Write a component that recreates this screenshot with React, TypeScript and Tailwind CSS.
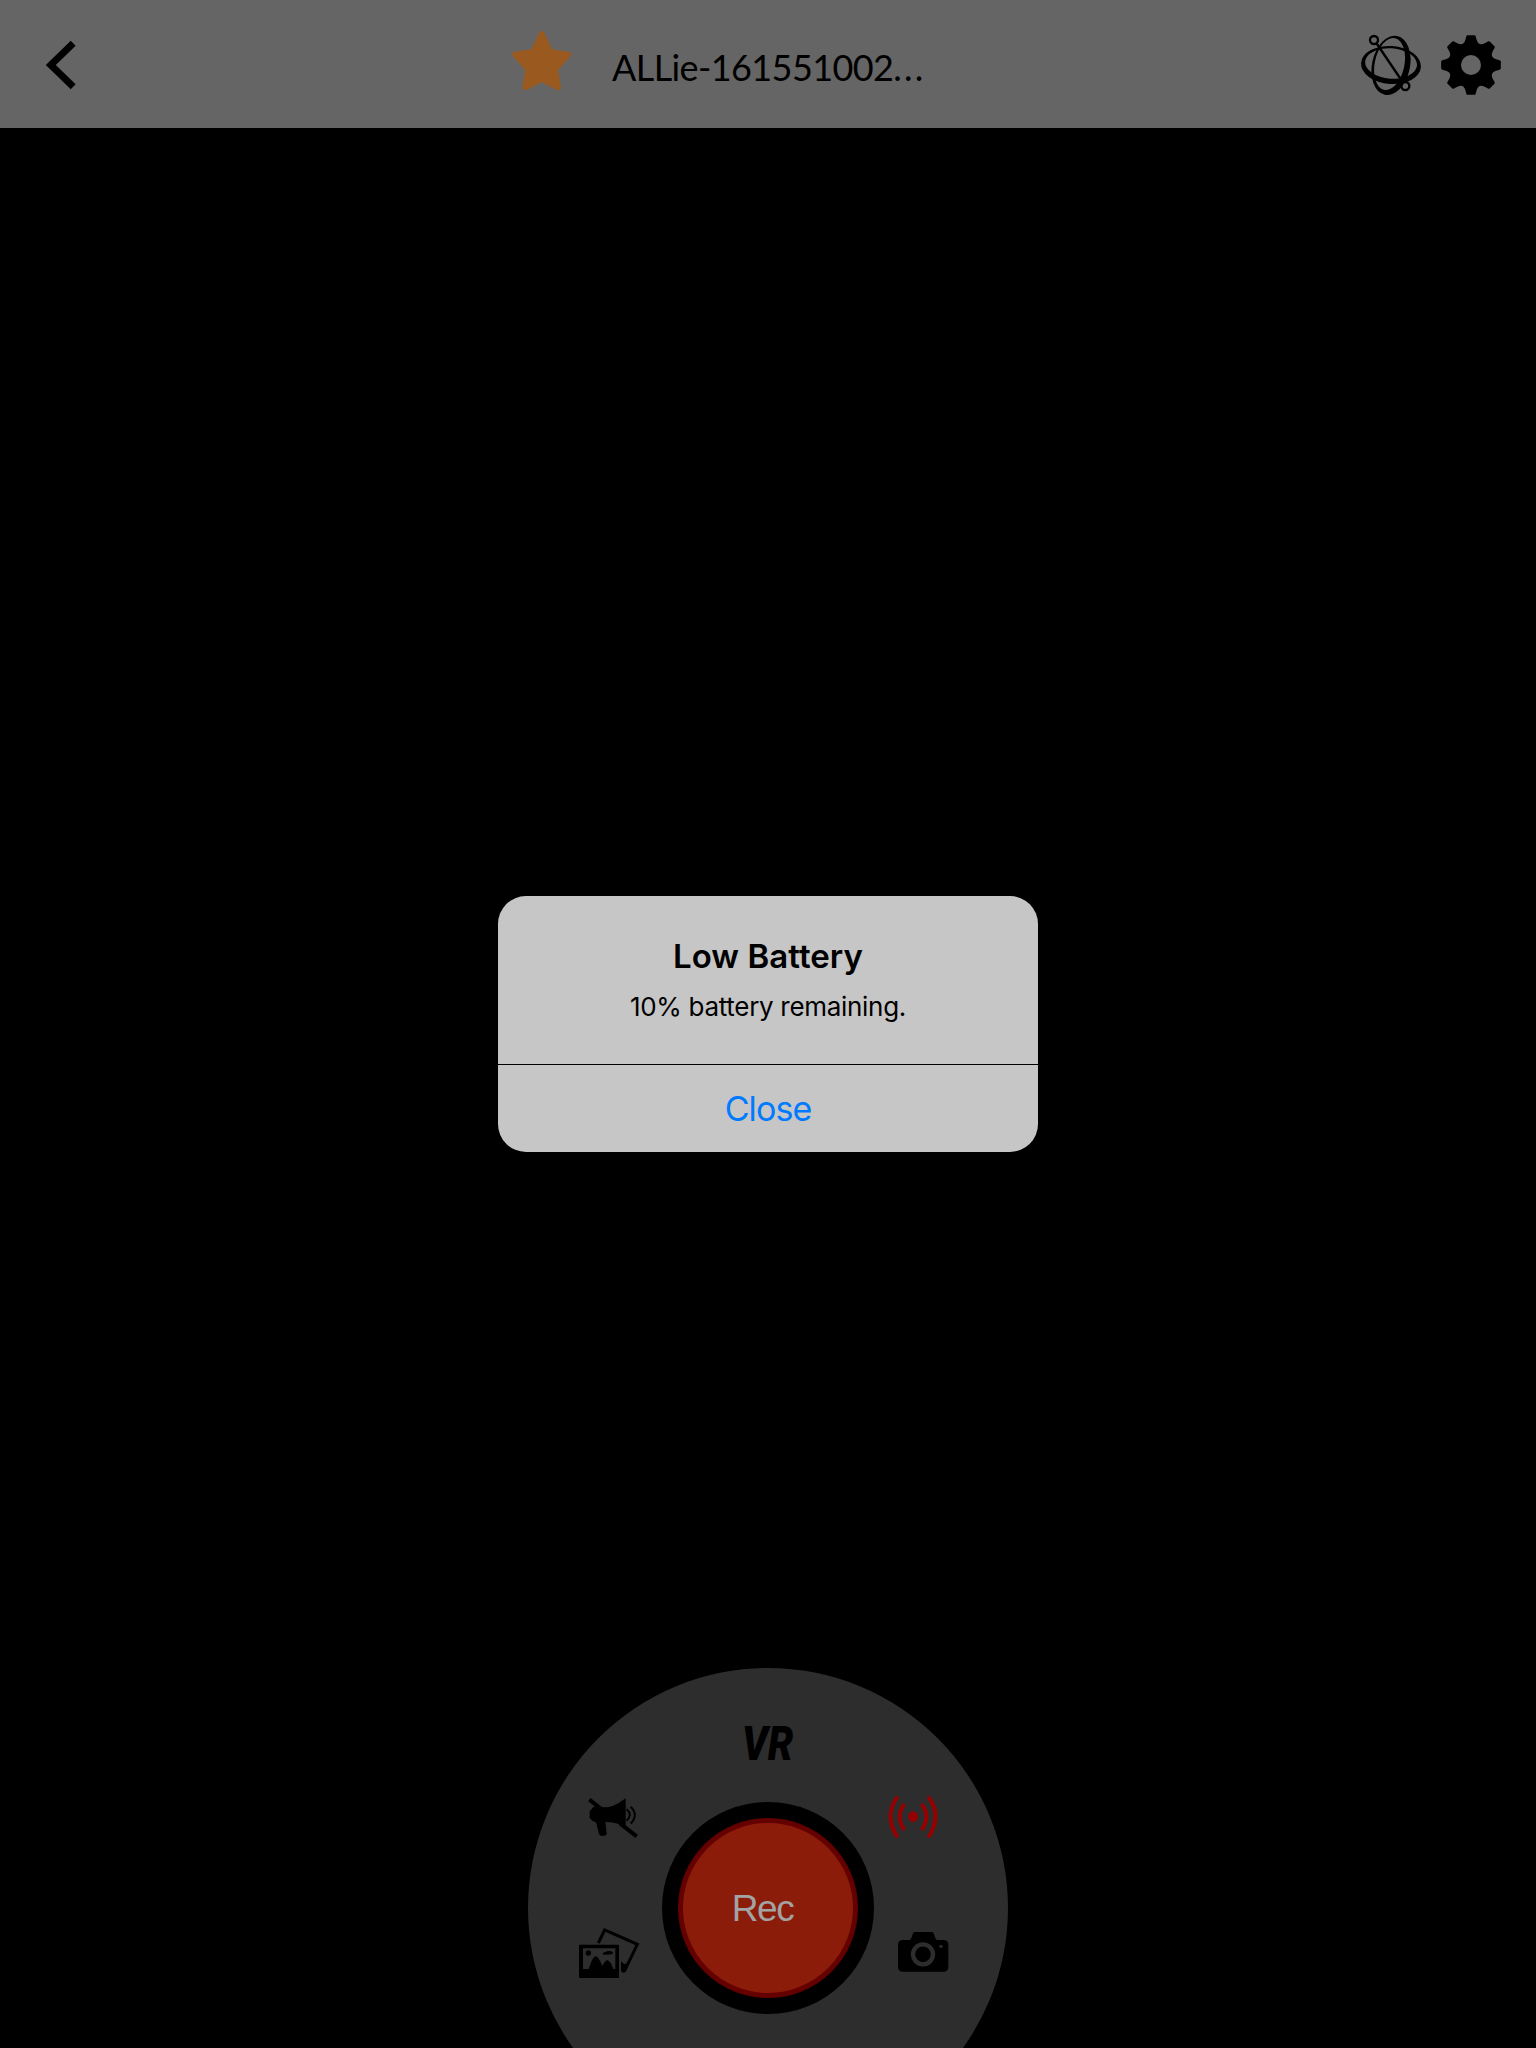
import React from "react";

function BackIcon() {
  return (
    <svg className="h-[54px] w-9" viewBox="0 0 36 54" fill="none" stroke="#000" strokeWidth="7">
      <path d="M31.2 5.2 8.8 27l22.4 21.8" />
    </svg>
  );
}

function StarIcon() {
  return (
    <svg className="h-16 w-16 shrink-0" viewBox="510 29 64 64" fill="#9a591f" stroke="#9a591f" strokeWidth="6" strokeLinejoin="round">
      <path d="M541.7 34.2 550 52l18 2.6-13.2 14.6 3.2 18-16.3-8.4-16.3 8.4 3.2-18-13.2-14.6 18-2.6z" />
    </svg>
  );
}

function OrbitIcon() {
  return (
    <svg className="h-[62px] w-16" viewBox="57 72 192 186" fill="none" stroke="#000" strokeWidth="7">
      <g transform="rotate(4 153 165)">
        <path
          fill="#000"
          stroke="none"
          fillRule="evenodd"
          d="M63 165a90 57 0 1 0 180 0a90 57 0 1 0-180 0zM75 160.500a78 45.500 0 1 0 156 0a78 45.500 0 1 0-156 0z"
        />
      </g>
      <g transform="rotate(12 153 166)">
        <path
          fill="#000"
          stroke="none"
          fillRule="evenodd"
          d="M96 166a57 90 0 1 0 114 0a57 90 0 1 0-114 0zM103.500 163a44.500 79 0 1 0 89 0a44.500 79 0 1 0-89 0z"
        />
      </g>
      <path d="M109 99 188 216" />
      <circle cx="102" cy="90" r="12" />
      <circle cx="196" cy="228" r="12" />
    </svg>
  );
}

const gearPath = (() => {
  const point = (x: number, y: number, turn: number) => {
    const a = (turn * Math.PI) / 4;
    const px = x * Math.cos(a) - y * Math.sin(a);
    const py = x * Math.sin(a) + y * Math.cos(a);
    return `${px.toFixed(2)} ${py.toFixed(2)}`;
  };
  let d = "";
  for (let i = 0; i < 8; i++) {
    d += `${i ? "L" : "M"}${point(-17, -75, i)}L${point(-14, -86, i)}Q${point(-13, -89.5, i)} ${point(-10, -89.5, i)}`;
    d += `L${point(10, -89.5, i)}Q${point(13, -89.5, i)} ${point(14, -86, i)}L${point(17, -75, i)}`;
    d += `Q${point(23, -56, i)} ${point(-17, -75, i + 1)}`;
  }
  return d + "ZM-30 0a30 30 0 1 0 60 0a30 30 0 1 0-60 0z";
})();

function GearIcon() {
  return (
    <svg className="h-[62px] w-[62px]" viewBox="-93 -93 186 186">
      <path d={gearPath} fillRule="evenodd" />
    </svg>
  );
}

function MegaphoneOffIcon() {
  return (
    <svg className="h-[70px] w-[90px]" viewBox="0 0 270 210">
      <path d="M58 59 98 90M150 130 200 169" stroke="#000" strokeWidth="12" />
      <path d="M59 94 70 81 82 78Q106 86 128 78Q148 70 167 55V142Q140 126 106 126L110 160Q109 168 98 168Q89 168 87 162L78 127 68 123 59 114z" />
      <path d="M170 88q19 16 0 34M182 80q25 24 0 51" fill="none" stroke="#000" strokeWidth="6" />
    </svg>
  );
}

function PicturesIcon() {
  return (
    <svg className="h-20 w-[90px]" viewBox="0 0 270 240">
      <path d="M100 99 119 60 217 103 178 184" fill="none" stroke="#000" strokeWidth="9" />
      <path d="M168 154 178 163 188 158 181 187 174 188 168 184z" />
      <path
        fillRule="evenodd"
        d="M44 104H160Q162 104 162 106V202Q162 204 160 204H44Q42 204 42 202V106Q42 104 44 104zM54 115V177H71Q83 139 92 139Q100 139 112 168Q120 151 127 151Q136 152 145 177H151V115z"
      />
      <circle cx="70" cy="129" r="8" />
      <path d="M113 131Q115 126 121 126Q127 122 136 123Q145 125 144 130Q141 135 121 134Q114 134 113 131z" />
    </svg>
  );
}

function BroadcastIcon() {
  return (
    <svg className="h-[70px] w-[90px]" viewBox="0 0 270 210" fill="none" stroke="#960000" strokeWidth="12">
      <ellipse cx="129" cy="110" rx="14.5" ry="16.5" fill="#960000" stroke="none" />
      <path d="M103 72Q75 109 103 150M155 72Q183 109 155 150M83 50Q40 108 83 172M175 50Q218 108 175 172" />
    </svg>
  );
}

function CameraIcon() {
  return (
    <svg className="h-[70px] w-[90px]" viewBox="0 0 270 210">
      <path d="M69 75H88Q94 73 97 61L99 55Q101 51 107 51H153Q159 51 161 55L164 64Q167 74 171 75H190Q205 75 205 90V155Q205 170 190 170H69Q54 170 54 155V90Q54 75 69 75z" />
      <circle cx="129" cy="118" r="30" fill="none" stroke="#2d2d2d" strokeWidth="13" />
      <circle cx="183" cy="94" r="5" fill="#2d2d2d" />
    </svg>
  );
}

function Header() {
  return (
    <header className="flex h-32 items-start bg-[#656565]">
      <button className="mt-[38px] ml-[42px]" aria-label="Back">
        <BackIcon />
      </button>
      <div className="mt-[29px] ml-[432px] flex w-[420px] items-start">
        <StarIcon />
        <h1 className="mt-4 ml-[38px] font-['Lato'] text-[36px] leading-[44px] tracking-[-0.6px] whitespace-nowrap text-black">
          ALLie-161551002<span className="tracking-[2.2px]">...</span>
        </h1>
      </div>
      <div className="mt-[34px] ml-auto flex pr-[34px]">
        <button aria-label="Orbit view">
          <OrbitIcon />
        </button>
        <button className="ml-[17px]" aria-label="Settings">
          <GearIcon />
        </button>
      </div>
    </header>
  );
}

function BatteryAlert() {
  return (
    <section
      role="alertdialog"
      className="flex h-64 w-[540px] flex-col overflow-hidden rounded-[28px] bg-[#c6c6c6] text-center font-['Inter'] text-black"
    >
      <div className="flex h-[169px] flex-col items-center border-b border-black pt-10">
        <h2 className="text-[33px] leading-[40px] font-semibold tracking-[0.05px]">Low Battery</h2>
        <p className="mt-[15px] text-[26px] leading-8 tracking-[-0.3px]">10% battery remaining.</p>
      </div>
      <button className="h-[87px] text-[34px] leading-[88px] tracking-[-0.9px] text-[#007aff]">Close</button>
    </section>
  );
}

function ControlDial() {
  return (
    <nav className="relative flex h-[480px] w-[480px] shrink-0 items-center justify-center rounded-full bg-[#2d2d2d]">
      <button className="absolute top-[48px] left-[213.5px] origin-left scale-x-[0.84] font-['Roboto'] text-[48px] leading-[56px] font-black text-black italic">
        VR
      </button>
      <button className="absolute top-[112px] left-[42px]" aria-label="Mute">
        <MegaphoneOffIcon />
      </button>
      <button className="absolute top-[112px] left-[342px]" aria-label="Live">
        <BroadcastIcon />
      </button>
      <button className="absolute top-[242px] left-[37px]" aria-label="Gallery">
        <PicturesIcon />
      </button>
      <button className="absolute top-[247px] left-[352px]" aria-label="Photo">
        <CameraIcon />
      </button>
      <div className="flex h-[212px] w-[212px] items-center justify-center rounded-full bg-black">
        <button className="flex h-[180px] w-[180px] items-center justify-center rounded-full border-[5px] border-[#640000] bg-[#8c1c0a] pt-0.5 pr-[11px] font-['Liberation_Sans'] text-[37px] tracking-[-1.4px] text-[#a3a3a3]">
          Rec
        </button>
      </div>
    </nav>
  );
}

export default function App() {
  return (
    <main className="flex h-[2048px] w-[1536px] flex-col overflow-hidden bg-black">
      <Header />
      <div className="flex flex-1 flex-col items-center pt-[768px]">
        <BatteryAlert />
        <div className="mt-[516px] h-[380px] overflow-hidden">
          <ControlDial />
        </div>
      </div>
    </main>
  );
}
